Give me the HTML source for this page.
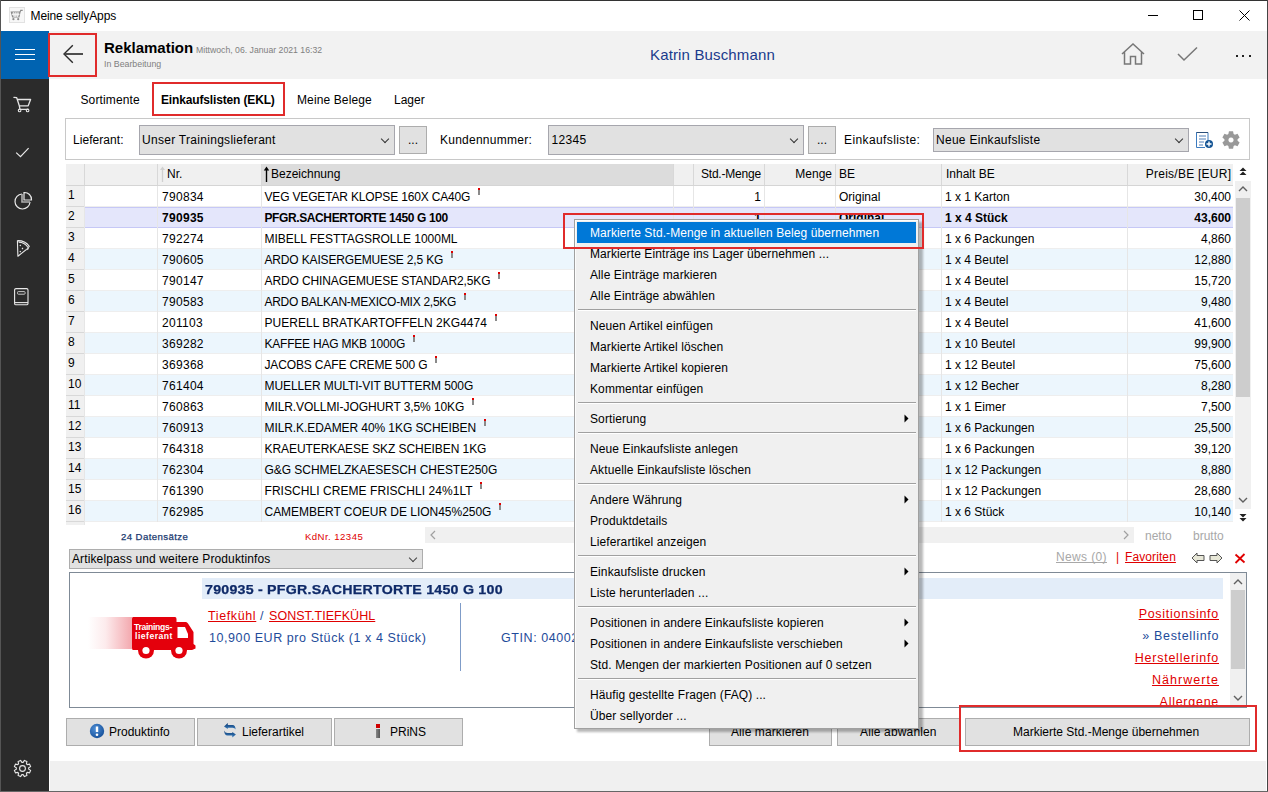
<!DOCTYPE html>
<html><head><meta charset="utf-8">
<style>
*{margin:0;padding:0;box-sizing:border-box}
html,body{width:1268px;height:792px;overflow:hidden;background:#fff}
body{position:relative;font-family:"Liberation Sans",sans-serif;font-size:12px;color:#000}
.a{position:absolute}
.t{position:absolute;white-space:pre;line-height:14px;font-size:12px}
.r{text-align:right}
.t{text-decoration-skip-ink:none}
.combo{position:absolute;background:#e1e1e1;border:1px solid #a6a6ad}
.btn{position:absolute;background:#e1e1e1;border:1px solid #adadad}
.chev{position:absolute;width:6px;height:6px;border-right:1px solid #333;border-bottom:1px solid #333;transform:rotate(45deg)}
</style></head><body>
<!-- window frame -->
<div class="a" style="left:0;top:0;width:1268px;height:1px;background:#333"></div>
<div class="a" style="left:0;top:0;width:1px;height:792px;background:#555"></div>
<div class="a" style="left:1267px;top:0;width:1px;height:792px;background:#444"></div>
<div class="a" style="left:0;top:791px;width:1268px;height:1px;background:#666"></div>

<!-- title bar -->
<svg class="a" style="left:9px;top:7px" width="16" height="16" viewBox="0 0 16 16"><rect x="0.5" y="0.5" width="15" height="15" fill="#f7f7f7" stroke="#e2e2e2" stroke-width="1"/><path d="M2.3 5.1 L3.6 10 L10 10 L11 5.1 Z" fill="#d0d0d0" stroke="#8c8c8c" stroke-width="1.1"/><path d="M4.6 5.1 L5.3 10 M6.8 5.1 L6.8 10 M9 5.1 L8.5 10 M2.8 7.5 L10.5 7.5" stroke="#f4f4f4" stroke-width="0.9"/><path d="M11 5.1 L11.7 3.4 L13.7 3.4" stroke="#8c8c8c" stroke-width="1.1" fill="none"/><circle cx="4.4" cy="12.2" r="1.1" fill="#8c8c8c"/><circle cx="9.2" cy="12.2" r="1.1" fill="#8c8c8c"/></svg>
<div class="t" style="left:30.5px;top:9px;font-size:12px;color:#000;letter-spacing:-0.12px">Meine sellyApps</div>
<!-- min/max/close -->
<div class="a" style="left:1148px;top:15px;width:10px;height:1px;background:#000"></div>
<div class="a" style="left:1193px;top:10px;width:10px;height:10px;border:1px solid #000"></div>
<svg class="a" style="left:1239px;top:10px" width="11" height="11" viewBox="0 0 11 11"><path d="M0.5 0.5 L10.5 10.5 M10.5 0.5 L0.5 10.5" stroke="#000" stroke-width="1"/></svg>

<!-- header -->
<div class="a" style="left:1px;top:31px;width:1266px;height:48px;background:#f2f2f2"></div>
<div class="a" style="left:1px;top:31px;width:48px;height:48px;background:#0063b1"></div>
<div class="a" style="left:15px;top:49px;width:20px;height:1px;background:#fff"></div>
<div class="a" style="left:15px;top:54px;width:20px;height:1px;background:#fff"></div>
<div class="a" style="left:15px;top:59px;width:20px;height:1px;background:#fff"></div>
<div class="a" style="left:48px;top:33px;width:49px;height:44px;border:2px solid #e02b2b"></div>
<svg class="a" style="left:62px;top:44px" width="22" height="20" viewBox="0 0 22 20"><path d="M10.8 1.2 L2 10 L10.8 18.8" stroke="#2a2a2a" stroke-width="1.4" fill="none"/><path d="M2.5 10 L21 10" stroke="#444" stroke-width="1.9"/></svg>
<div class="t" style="left:104px;top:39.6px;font-size:15px;font-weight:bold;line-height:16px">Reklamation</div>
<div class="t" style="left:196px;top:44.6px;font-size:8.7px;line-height:10px;color:#808080">Mittwoch, 06. Januar 2021 16:32</div>
<div class="t" style="left:104px;top:59px;font-size:8.8px;line-height:10px;color:#808080">In Bearbeitung</div>
<div class="t" style="left:650px;top:47px;font-size:15px;line-height:16px;color:#1a3a8c;letter-spacing:0.15px">Katrin Buschmann</div>
<svg class="a" style="left:1121px;top:43px" width="24" height="22" viewBox="0 0 24 22"><path d="M1 11 L12 1 L23 11 M3.5 9 L3.5 21 L9.5 21 L9.5 13.5 L14.5 13.5 L14.5 21 L20.5 21 L20.5 9" stroke="#777" stroke-width="1.5" fill="none"/></svg>
<svg class="a" style="left:1177px;top:46px" width="22" height="16" viewBox="0 0 22 16"><path d="M1 8 L7 14 L20 1.5" stroke="#777" stroke-width="1.5" fill="none"/></svg>
<div class="a" style="left:1236px;top:55px;width:2px;height:2px;background:#222"></div>
<div class="a" style="left:1242px;top:55px;width:2px;height:2px;background:#222"></div>
<div class="a" style="left:1249px;top:55px;width:2px;height:2px;background:#222"></div>

<!-- sidebar -->
<div class="a" style="left:1px;top:79px;width:48px;height:712px;background:#2b2b2b"></div>
<svg class="a" style="left:13px;top:95px" width="20" height="18" viewBox="0 0 20 18"><path d="M0.9 2.4 L3.7 2.7 L6.3 10.8 L7 14.4 L15.3 14.4 M4.3 4.5 L17.6 4.5 L15.2 10.8 L6.3 10.8" stroke="#e4e4e4" stroke-width="1.3" fill="none" stroke-linejoin="round" stroke-linecap="round"/><circle cx="6.6" cy="15.4" r="1.3" stroke="#e4e4e4" stroke-width="1.1" fill="none"/><circle cx="14.6" cy="15.4" r="1.3" stroke="#e4e4e4" stroke-width="1.1" fill="none"/></svg>
<svg class="a" style="left:15px;top:147px" width="16" height="12" viewBox="0 0 16 12"><path d="M1.2 5.6 L5.5 9.7 L13.6 1.2" stroke="#e8e8e8" stroke-width="1.2" fill="none"/></svg>
<svg class="a" style="left:13px;top:190.5px" width="20" height="20" viewBox="0 0 20 20"><path d="M9 3 A7.5 7.5 0 1 0 17 11" stroke="#e8e8e8" stroke-width="1.2" fill="none"/><path d="M9 3 L9 11 L17 11" stroke="#b0b0b0" stroke-width="1.6" fill="none"/><path d="M11 1.5 A7 7 0 0 1 18.5 9 L11 9 Z" stroke="#e8e8e8" stroke-width="1.2" fill="none"/></svg>
<svg class="a" style="left:15px;top:239px" width="18" height="19" viewBox="0 0 18 19"><path d="M2.4 1.6 L2.9 17.2 L12.5 9.6 M2.4 1.6 Q10 1.4 14.3 7.3 L12.5 9.6 M3.6 3.3 Q9.6 3.4 12.9 8.2" stroke="#e8e8e8" stroke-width="1.1" fill="none" stroke-linejoin="round"/><path d="M11.2 10.4 Q12 11 13 10 Q13.8 9 13.4 8.3" stroke="#c8c8c8" stroke-width="1.1" fill="none"/><path d="M5.3 5.5 L6.2 6.4 L5.3 7.3 L4.4 6.4 Z M7.5 8.6 L8.4 9.5 L7.5 10.4 L6.6 9.5 Z M5.3 11.7 L6.2 12.6 L5.3 13.5 L4.4 12.6 Z" fill="#e8e8e8"/></svg>
<svg class="a" style="left:13px;top:288px" width="17" height="19" viewBox="0 0 17 19"><rect x="1.6" y="0.6" width="13.4" height="16.2" rx="1.4" stroke="#e8e8e8" stroke-width="1.1" fill="none"/><path d="M1.6 14.6 L15 14.6" stroke="#e8e8e8" stroke-width="1.1"/><rect x="4.5" y="3.6" width="7.6" height="2.6" rx="0.8" stroke="#c8c8c8" stroke-width="1" fill="none"/></svg>
<svg class="a" style="left:13px;top:759px" width="19" height="19" viewBox="0 0 19 19"><path d="M15.67 10.11 L17.59 11.36 L16.53 13.91 L14.29 13.43 L13.43 14.29 L13.91 16.53 L11.36 17.59 L10.11 15.67 L8.89 15.67 L7.64 17.59 L5.09 16.53 L5.57 14.29 L4.71 13.43 L2.47 13.91 L1.41 11.36 L3.33 10.11 L3.33 8.89 L1.41 7.64 L2.47 5.09 L4.71 5.57 L5.57 4.71 L5.09 2.47 L7.64 1.41 L8.89 3.33 L10.11 3.33 L11.36 1.41 L13.91 2.47 L13.43 4.71 L14.29 5.57 L16.53 5.09 L17.59 7.64 L15.67 8.89 Z" stroke="#e8e8e8" stroke-width="1.1" fill="none"/><circle cx="9.5" cy="9.5" r="2.9" stroke="#e8e8e8" stroke-width="1.1" fill="none"/></svg>

<!-- bottom gray strip -->
<div class="a" style="left:50px;top:761px;width:1216px;height:30px;background:#f0f0f0"></div>

<!-- tabs -->
<div class="t" style="left:80.5px;top:93px;letter-spacing:0.12px">Sortimente</div>
<div class="t" style="left:161px;top:93px;font-weight:bold;letter-spacing:-0.15px">Einkaufslisten (EKL)</div>
<div class="t" style="left:297px;top:93px;letter-spacing:0.12px">Meine Belege</div>
<div class="t" style="left:394px;top:93px">Lager</div>
<div class="a" style="left:152px;top:82px;width:133px;height:34px;border:2px solid #e02b2b"></div>

<!-- filter bar -->
<div class="a" style="left:65px;top:118px;width:1185px;height:42px;border:1px solid #c8c8c8"></div>
<div class="t" style="left:73px;top:133px;letter-spacing:0.05px">Lieferant:</div>
<div class="combo" style="left:139px;top:125px;width:256px;height:30px"></div>
<div class="t" style="left:142px;top:133px;letter-spacing:0.29px">Unser Trainingslieferant</div>
<div class="chev" style="left:382px;top:136px"></div>
<div class="btn" style="left:399px;top:126px;width:28px;height:28px"></div>
<div class="t" style="left:408px;top:133px">...</div>
<div class="t" style="left:440px;top:133px;letter-spacing:0.25px">Kundennummer:</div>
<div class="combo" style="left:548px;top:125px;width:256px;height:30px"></div>
<div class="t" style="left:551.5px;top:133px;letter-spacing:0.3px">12345</div>
<div class="chev" style="left:791px;top:136px"></div>
<div class="btn" style="left:808px;top:126px;width:28px;height:28px"></div>
<div class="t" style="left:817px;top:133px">...</div>
<div class="t" style="left:844px;top:133px;letter-spacing:0.4px">Einkaufsliste:</div>
<div class="combo" style="left:933px;top:128px;width:256px;height:24px"></div>
<div class="t" style="left:936px;top:133px;letter-spacing:0.28px">Neue Einkaufsliste</div>
<div class="chev" style="left:1176px;top:136px"></div>
<svg class="a" style="left:1195px;top:131px" width="19" height="18" viewBox="0 0 19 18"><path d="M1.5 1.5 L13 1.5 L13 10 M1.5 1.5 L1.5 16.5 L10 16.5" stroke="#3d7cc0" stroke-width="1" fill="none"/><path d="M4 5 L11 5 M4 8 L11 8 M4 11 L9 11 M4 14 L8 14" stroke="#4f7fb8" stroke-width="1"/><path d="M1.5 1.5 L13 1.5" stroke="#2b4f7a" stroke-width="1"/><circle cx="14" cy="13" r="4" fill="#145494"/><path d="M14 10.5 L14 15.5 M11.5 13 L16.5 13" stroke="#fff" stroke-width="1.4"/></svg>
<svg class="a" style="left:1221px;top:130px" width="20" height="20" viewBox="0 0 20 20"><path fill-rule="evenodd" d="M7.38 3.94 L7.94 1.24 L12.06 1.24 L12.62 3.94 L13.94 4.70 L16.55 3.83 L18.62 7.41 L16.56 9.24 L16.56 10.76 L18.62 12.59 L16.55 16.17 L13.94 15.30 L12.62 16.06 L12.06 18.76 L7.94 18.76 L7.38 16.06 L6.06 15.30 L3.45 16.17 L1.38 12.59 L3.44 10.76 L3.44 9.24 L1.38 7.41 L3.45 3.83 L6.06 4.70 Z M10 7.4 A2.6 2.6 0 1 0 10.001 7.4 Z" fill="#999"/></svg>

<!-- TABLE -->
<div class="a" style="left:66px;top:164px;width:1167px;height:21px;background:#f0f0f0"></div>
<div class="a" style="left:262px;top:164px;width:411px;height:21px;background:#dcdcdc"></div>
<div class="a" style="left:66px;top:185px;width:1167px;height:1px;background:#d5d5d5"></div>
<div class="a" style="left:84px;top:164px;width:1px;height:21px;background:#d8d8d8"></div>
<div class="a" style="left:157px;top:164px;width:1px;height:21px;background:#d8d8d8"></div>
<div class="a" style="left:261px;top:164px;width:1px;height:21px;background:#d8d8d8"></div>
<div class="a" style="left:673px;top:164px;width:1px;height:21px;background:#d8d8d8"></div>
<div class="a" style="left:693px;top:164px;width:1px;height:21px;background:#d8d8d8"></div>
<div class="a" style="left:764px;top:164px;width:1px;height:21px;background:#d8d8d8"></div>
<div class="a" style="left:835px;top:164px;width:1px;height:21px;background:#d8d8d8"></div>
<div class="a" style="left:941px;top:164px;width:1px;height:21px;background:#d8d8d8"></div>
<div class="a" style="left:1127px;top:164px;width:1px;height:21px;background:#d8d8d8"></div>
<div class="t" style="left:167px;top:166.84px;">Nr.</div>
<svg class="a" style="left:159px;top:166px" width="7" height="17" viewBox="0 0 7 17"><path d="M3.5 3 L3.5 16" stroke="#d0d0d0" stroke-width="1.3"/><path d="M3.5 0.5 L6 4 L1 4 Z" fill="#d0d0d0"/></svg>
<svg class="a" style="left:263px;top:166px" width="7" height="17" viewBox="0 0 7 17"><path d="M3.5 3 L3.5 16" stroke="#000" stroke-width="1.4"/><path d="M3.5 0.5 L6.2 4.5 L0.8 4.5 Z" fill="#000"/></svg>
<div class="t" style="left:271px;top:166.84px;">Bezeichnung</div>
<div class="t r" style="left:691px;width:70px;top:166.84px;letter-spacing:-0.2px">Std.-Menge</div>
<div class="t r" style="left:772px;width:60px;top:166.84px;">Menge</div>
<div class="t" style="left:839px;top:166.84px;">BE</div>
<div class="t" style="left:946px;top:166.84px;">Inhalt BE</div>
<div class="t r" style="left:1131.3px;width:100px;top:166.84px;letter-spacing:0.25px">Preis/BE [EUR]</div>
<div class="a" style="left:85px;top:186px;width:1148px;height:21px;background:#ffffff"></div>
<div class="a" style="left:66px;top:186px;width:18px;height:21px;background:#f0f0f0"></div>
<div class="a" style="left:66px;top:206px;width:18px;height:1px;background:#d8d8d8"></div>
<div class="a" style="left:85px;top:206px;width:1148px;height:1px;background:#eeeeee"></div>
<div class="t" style="left:68px;top:187.84px;">1</div>
<div class="t" style="left:162px;top:189.84px;letter-spacing:0.3px">790834</div>
<div class="t" style="left:264.5px;top:189.84px;letter-spacing:-0.166px">VEG VEGETAR KLOPSE 160X CA40G</div>
<div class="a" style="left:478px;top:188px;width:2px;height:2px;background:#e00000"></div>
<div class="a" style="left:478px;top:190px;width:2px;height:5px;background:#8a8a8a"></div>
<div class="t r" style="left:721px;width:40px;top:189.84px;">1</div>
<div class="t" style="left:839px;top:189.84px;">Original</div>
<div class="t" style="left:945px;top:189.84px;">1 x 1 Karton</div>
<div class="t r" style="left:1151px;width:80px;top:189.84px;">30,400</div>
<div class="a" style="left:85px;top:207px;width:1148px;height:21px;background:#e4e6fb"></div>
<div class="a" style="left:66px;top:207px;width:18px;height:21px;background:#f0f0f0"></div>
<div class="a" style="left:66px;top:227px;width:18px;height:1px;background:#d8d8d8"></div>
<div class="a" style="left:85px;top:207px;width:1148px;height:1px;background:#c6c8f6"></div>
<div class="a" style="left:85px;top:227px;width:1148px;height:1px;background:#c6c8f6"></div>
<div class="t" style="left:68px;top:208.84px;">2</div>
<div class="t" style="left:162px;top:210.84px;font-weight:bold;letter-spacing:0.3px">790935</div>
<div class="t" style="left:264.5px;top:210.84px;font-weight:bold;letter-spacing:-0.393px">PFGR.SACHERTORTE 1450 G 100</div>
<div class="t r" style="left:721px;width:40px;top:210.84px;font-weight:bold;">1</div>
<div class="t" style="left:839px;top:210.84px;font-weight:bold;">Original</div>
<div class="t" style="left:945px;top:210.84px;font-weight:bold;">1 x 4 Stück</div>
<div class="t r" style="left:1151px;width:80px;top:210.84px;font-weight:bold;">43,600</div>
<div class="a" style="left:85px;top:228px;width:1148px;height:21px;background:#ffffff"></div>
<div class="a" style="left:66px;top:228px;width:18px;height:21px;background:#f0f0f0"></div>
<div class="a" style="left:66px;top:248px;width:18px;height:1px;background:#d8d8d8"></div>
<div class="a" style="left:85px;top:248px;width:1148px;height:1px;background:#eeeeee"></div>
<div class="t" style="left:68px;top:229.84px;">3</div>
<div class="t" style="left:162px;top:231.84px;letter-spacing:0.3px">792274</div>
<div class="t" style="left:264.5px;top:231.84px;letter-spacing:-0.041px">MIBELL FESTTAGSROLLE 1000ML</div>
<div class="t r" style="left:721px;width:40px;top:231.84px;">1</div>
<div class="t" style="left:839px;top:231.84px;">Original</div>
<div class="t" style="left:945px;top:231.84px;">1 x 6 Packungen</div>
<div class="t r" style="left:1151px;width:80px;top:231.84px;">4,860</div>
<div class="a" style="left:85px;top:249px;width:1148px;height:21px;background:#ecf6fd"></div>
<div class="a" style="left:66px;top:249px;width:18px;height:21px;background:#f0f0f0"></div>
<div class="a" style="left:66px;top:269px;width:18px;height:1px;background:#d8d8d8"></div>
<div class="a" style="left:85px;top:269px;width:1148px;height:1px;background:#eeeeee"></div>
<div class="t" style="left:68px;top:250.84px;">4</div>
<div class="t" style="left:162px;top:252.84px;letter-spacing:0.3px">790605</div>
<div class="t" style="left:264.5px;top:252.84px;letter-spacing:-0.16px">ARDO KAISERGEMUESE 2,5 KG</div>
<div class="a" style="left:451px;top:251px;width:2px;height:2px;background:#e00000"></div>
<div class="a" style="left:451px;top:253px;width:2px;height:5px;background:#8a8a8a"></div>
<div class="t r" style="left:721px;width:40px;top:252.84px;">1</div>
<div class="t" style="left:839px;top:252.84px;">Original</div>
<div class="t" style="left:945px;top:252.84px;">1 x 4 Beutel</div>
<div class="t r" style="left:1151px;width:80px;top:252.84px;">12,880</div>
<div class="a" style="left:85px;top:270px;width:1148px;height:21px;background:#ffffff"></div>
<div class="a" style="left:66px;top:270px;width:18px;height:21px;background:#f0f0f0"></div>
<div class="a" style="left:66px;top:290px;width:18px;height:1px;background:#d8d8d8"></div>
<div class="a" style="left:85px;top:290px;width:1148px;height:1px;background:#eeeeee"></div>
<div class="t" style="left:68px;top:271.84px;">5</div>
<div class="t" style="left:162px;top:273.84px;letter-spacing:0.3px">790147</div>
<div class="t" style="left:264.5px;top:273.84px;letter-spacing:-0.107px">ARDO CHINAGEMUESE STANDAR2,5KG</div>
<div class="a" style="left:498px;top:272px;width:2px;height:2px;background:#e00000"></div>
<div class="a" style="left:498px;top:274px;width:2px;height:5px;background:#8a8a8a"></div>
<div class="t r" style="left:721px;width:40px;top:273.84px;">1</div>
<div class="t" style="left:839px;top:273.84px;">Original</div>
<div class="t" style="left:945px;top:273.84px;">1 x 4 Beutel</div>
<div class="t r" style="left:1151px;width:80px;top:273.84px;">15,720</div>
<div class="a" style="left:85px;top:291px;width:1148px;height:21px;background:#ecf6fd"></div>
<div class="a" style="left:66px;top:291px;width:18px;height:21px;background:#f0f0f0"></div>
<div class="a" style="left:66px;top:311px;width:18px;height:1px;background:#d8d8d8"></div>
<div class="a" style="left:85px;top:311px;width:1148px;height:1px;background:#eeeeee"></div>
<div class="t" style="left:68px;top:292.84px;">6</div>
<div class="t" style="left:162px;top:294.84px;letter-spacing:0.3px">790583</div>
<div class="t" style="left:264.5px;top:294.84px;letter-spacing:-0.279px">ARDO BALKAN-MEXICO-MIX 2,5KG</div>
<div class="a" style="left:464px;top:293px;width:2px;height:2px;background:#e00000"></div>
<div class="a" style="left:464px;top:295px;width:2px;height:5px;background:#8a8a8a"></div>
<div class="t r" style="left:721px;width:40px;top:294.84px;">1</div>
<div class="t" style="left:839px;top:294.84px;">Original</div>
<div class="t" style="left:945px;top:294.84px;">1 x 4 Beutel</div>
<div class="t r" style="left:1151px;width:80px;top:294.84px;">9,480</div>
<div class="a" style="left:85px;top:312px;width:1148px;height:21px;background:#ffffff"></div>
<div class="a" style="left:66px;top:312px;width:18px;height:21px;background:#f0f0f0"></div>
<div class="a" style="left:66px;top:332px;width:18px;height:1px;background:#d8d8d8"></div>
<div class="a" style="left:85px;top:332px;width:1148px;height:1px;background:#eeeeee"></div>
<div class="t" style="left:68px;top:313.84px;">7</div>
<div class="t" style="left:162px;top:315.84px;letter-spacing:0.3px">201103</div>
<div class="t" style="left:264.5px;top:315.84px;letter-spacing:0.027px">PUERELL BRATKARTOFFELN 2KG4474</div>
<div class="a" style="left:495px;top:314px;width:2px;height:2px;background:#e00000"></div>
<div class="a" style="left:495px;top:316px;width:2px;height:5px;background:#8a8a8a"></div>
<div class="t r" style="left:721px;width:40px;top:315.84px;">1</div>
<div class="t" style="left:839px;top:315.84px;">Original</div>
<div class="t" style="left:945px;top:315.84px;">1 x 4 Beutel</div>
<div class="t r" style="left:1151px;width:80px;top:315.84px;">41,600</div>
<div class="a" style="left:85px;top:333px;width:1148px;height:21px;background:#ecf6fd"></div>
<div class="a" style="left:66px;top:333px;width:18px;height:21px;background:#f0f0f0"></div>
<div class="a" style="left:66px;top:353px;width:18px;height:1px;background:#d8d8d8"></div>
<div class="a" style="left:85px;top:353px;width:1148px;height:1px;background:#eeeeee"></div>
<div class="t" style="left:68px;top:334.84px;">8</div>
<div class="t" style="left:162px;top:336.84px;letter-spacing:0.3px">369282</div>
<div class="t" style="left:264.5px;top:336.84px;letter-spacing:-0.21px">KAFFEE HAG MKB 1000G</div>
<div class="a" style="left:413px;top:335px;width:2px;height:2px;background:#e00000"></div>
<div class="a" style="left:413px;top:337px;width:2px;height:5px;background:#8a8a8a"></div>
<div class="t r" style="left:721px;width:40px;top:336.84px;">1</div>
<div class="t" style="left:839px;top:336.84px;">Original</div>
<div class="t" style="left:945px;top:336.84px;">1 x 10 Beutel</div>
<div class="t r" style="left:1151px;width:80px;top:336.84px;">99,900</div>
<div class="a" style="left:85px;top:354px;width:1148px;height:21px;background:#ffffff"></div>
<div class="a" style="left:66px;top:354px;width:18px;height:21px;background:#f0f0f0"></div>
<div class="a" style="left:66px;top:374px;width:18px;height:1px;background:#d8d8d8"></div>
<div class="a" style="left:85px;top:374px;width:1148px;height:1px;background:#eeeeee"></div>
<div class="t" style="left:68px;top:355.84px;">9</div>
<div class="t" style="left:162px;top:357.84px;letter-spacing:0.3px">369368</div>
<div class="t" style="left:264.5px;top:357.84px;letter-spacing:-0.139px">JACOBS CAFE CREME 500 G</div>
<div class="a" style="left:435px;top:356px;width:2px;height:2px;background:#e00000"></div>
<div class="a" style="left:435px;top:358px;width:2px;height:5px;background:#8a8a8a"></div>
<div class="t r" style="left:721px;width:40px;top:357.84px;">1</div>
<div class="t" style="left:839px;top:357.84px;">Original</div>
<div class="t" style="left:945px;top:357.84px;">1 x 12 Beutel</div>
<div class="t r" style="left:1151px;width:80px;top:357.84px;">75,600</div>
<div class="a" style="left:85px;top:375px;width:1148px;height:21px;background:#ecf6fd"></div>
<div class="a" style="left:66px;top:375px;width:18px;height:21px;background:#f0f0f0"></div>
<div class="a" style="left:66px;top:395px;width:18px;height:1px;background:#d8d8d8"></div>
<div class="a" style="left:85px;top:395px;width:1148px;height:1px;background:#eeeeee"></div>
<div class="t" style="left:68px;top:376.84px;">10</div>
<div class="t" style="left:162px;top:378.84px;letter-spacing:0.3px">761404</div>
<div class="t" style="left:264.5px;top:378.84px;letter-spacing:-0.097px">MUELLER MULTI-VIT BUTTERM 500G</div>
<div class="t r" style="left:721px;width:40px;top:378.84px;">1</div>
<div class="t" style="left:839px;top:378.84px;">Original</div>
<div class="t" style="left:945px;top:378.84px;">1 x 12 Becher</div>
<div class="t r" style="left:1151px;width:80px;top:378.84px;">8,280</div>
<div class="a" style="left:85px;top:396px;width:1148px;height:21px;background:#ffffff"></div>
<div class="a" style="left:66px;top:396px;width:18px;height:21px;background:#f0f0f0"></div>
<div class="a" style="left:66px;top:416px;width:18px;height:1px;background:#d8d8d8"></div>
<div class="a" style="left:85px;top:416px;width:1148px;height:1px;background:#eeeeee"></div>
<div class="t" style="left:68px;top:397.84px;">11</div>
<div class="t" style="left:162px;top:399.84px;letter-spacing:0.3px">760863</div>
<div class="t" style="left:264.5px;top:399.84px;letter-spacing:-0.086px">MILR.VOLLMI-JOGHURT 3,5% 10KG</div>
<div class="a" style="left:472px;top:398px;width:2px;height:2px;background:#e00000"></div>
<div class="a" style="left:472px;top:400px;width:2px;height:5px;background:#8a8a8a"></div>
<div class="t r" style="left:721px;width:40px;top:399.84px;">1</div>
<div class="t" style="left:839px;top:399.84px;">Original</div>
<div class="t" style="left:945px;top:399.84px;">1 x 1 Eimer</div>
<div class="t r" style="left:1151px;width:80px;top:399.84px;">7,500</div>
<div class="a" style="left:85px;top:417px;width:1148px;height:21px;background:#ecf6fd"></div>
<div class="a" style="left:66px;top:417px;width:18px;height:21px;background:#f0f0f0"></div>
<div class="a" style="left:66px;top:437px;width:18px;height:1px;background:#d8d8d8"></div>
<div class="a" style="left:85px;top:437px;width:1148px;height:1px;background:#eeeeee"></div>
<div class="t" style="left:68px;top:418.84px;">12</div>
<div class="t" style="left:162px;top:420.84px;letter-spacing:0.3px">760913</div>
<div class="t" style="left:264.5px;top:420.84px;letter-spacing:-0.083px">MILR.K.EDAMER 40% 1KG SCHEIBEN</div>
<div class="a" style="left:484px;top:419px;width:2px;height:2px;background:#e00000"></div>
<div class="a" style="left:484px;top:421px;width:2px;height:5px;background:#8a8a8a"></div>
<div class="t r" style="left:721px;width:40px;top:420.84px;">1</div>
<div class="t" style="left:839px;top:420.84px;">Original</div>
<div class="t" style="left:945px;top:420.84px;">1 x 6 Packungen</div>
<div class="t r" style="left:1151px;width:80px;top:420.84px;">25,500</div>
<div class="a" style="left:85px;top:438px;width:1148px;height:21px;background:#ffffff"></div>
<div class="a" style="left:66px;top:438px;width:18px;height:21px;background:#f0f0f0"></div>
<div class="a" style="left:66px;top:458px;width:18px;height:1px;background:#d8d8d8"></div>
<div class="a" style="left:85px;top:458px;width:1148px;height:1px;background:#eeeeee"></div>
<div class="t" style="left:68px;top:439.84px;">13</div>
<div class="t" style="left:162px;top:441.84px;letter-spacing:0.3px">764318</div>
<div class="t" style="left:264.5px;top:441.84px;letter-spacing:-0.073px">KRAEUTERKAESE SKZ SCHEIBEN 1KG</div>
<div class="t r" style="left:721px;width:40px;top:441.84px;">1</div>
<div class="t" style="left:839px;top:441.84px;">Original</div>
<div class="t" style="left:945px;top:441.84px;">1 x 6 Packungen</div>
<div class="t r" style="left:1151px;width:80px;top:441.84px;">39,120</div>
<div class="a" style="left:85px;top:459px;width:1148px;height:21px;background:#ecf6fd"></div>
<div class="a" style="left:66px;top:459px;width:18px;height:21px;background:#f0f0f0"></div>
<div class="a" style="left:66px;top:479px;width:18px;height:1px;background:#d8d8d8"></div>
<div class="a" style="left:85px;top:479px;width:1148px;height:1px;background:#eeeeee"></div>
<div class="t" style="left:68px;top:460.84px;">14</div>
<div class="t" style="left:162px;top:462.84px;letter-spacing:0.3px">762304</div>
<div class="t" style="left:264.5px;top:462.84px;letter-spacing:-0.043px">G&amp;G SCHMELZKAESESCH CHESTE250G</div>
<div class="t r" style="left:721px;width:40px;top:462.84px;">1</div>
<div class="t" style="left:839px;top:462.84px;">Original</div>
<div class="t" style="left:945px;top:462.84px;">1 x 12 Packungen</div>
<div class="t r" style="left:1151px;width:80px;top:462.84px;">8,880</div>
<div class="a" style="left:85px;top:480px;width:1148px;height:21px;background:#ffffff"></div>
<div class="a" style="left:66px;top:480px;width:18px;height:21px;background:#f0f0f0"></div>
<div class="a" style="left:66px;top:500px;width:18px;height:1px;background:#d8d8d8"></div>
<div class="a" style="left:85px;top:500px;width:1148px;height:1px;background:#eeeeee"></div>
<div class="t" style="left:68px;top:481.84px;">15</div>
<div class="t" style="left:162px;top:483.84px;letter-spacing:0.3px">761390</div>
<div class="t" style="left:264.5px;top:483.84px;letter-spacing:0.057px">FRISCHLI CREME FRISCHLI 24%1LT</div>
<div class="a" style="left:480px;top:482px;width:2px;height:2px;background:#e00000"></div>
<div class="a" style="left:480px;top:484px;width:2px;height:5px;background:#8a8a8a"></div>
<div class="t r" style="left:721px;width:40px;top:483.84px;">1</div>
<div class="t" style="left:839px;top:483.84px;">Original</div>
<div class="t" style="left:945px;top:483.84px;">1 x 12 Packungen</div>
<div class="t r" style="left:1151px;width:80px;top:483.84px;">28,680</div>
<div class="a" style="left:85px;top:501px;width:1148px;height:21px;background:#ecf6fd"></div>
<div class="a" style="left:66px;top:501px;width:18px;height:21px;background:#f0f0f0"></div>
<div class="a" style="left:66px;top:521px;width:18px;height:1px;background:#d8d8d8"></div>
<div class="a" style="left:85px;top:521px;width:1148px;height:1px;background:#eeeeee"></div>
<div class="t" style="left:68px;top:502.84px;">16</div>
<div class="t" style="left:162px;top:504.84px;letter-spacing:0.3px">762985</div>
<div class="t" style="left:264.5px;top:504.84px;letter-spacing:-0.023px">CAMEMBERT COEUR DE LION45%250G</div>
<div class="a" style="left:499px;top:503px;width:2px;height:2px;background:#e00000"></div>
<div class="a" style="left:499px;top:505px;width:2px;height:5px;background:#8a8a8a"></div>
<div class="t r" style="left:721px;width:40px;top:504.84px;">1</div>
<div class="t" style="left:839px;top:504.84px;">Original</div>
<div class="t" style="left:945px;top:504.84px;">1 x 6 Stück</div>
<div class="t r" style="left:1151px;width:80px;top:504.84px;">10,140</div>
<div class="a" style="left:84px;top:186px;width:1px;height:339px;background:#e6e6e6"></div>
<div class="a" style="left:157px;top:186px;width:1px;height:339px;background:#e6e6e6"></div>
<div class="a" style="left:261px;top:186px;width:1px;height:339px;background:#e6e6e6"></div>
<div class="a" style="left:673px;top:186px;width:1px;height:339px;background:#e6e6e6"></div>
<div class="a" style="left:693px;top:186px;width:1px;height:339px;background:#e6e6e6"></div>
<div class="a" style="left:764px;top:186px;width:1px;height:339px;background:#e6e6e6"></div>
<div class="a" style="left:835px;top:186px;width:1px;height:339px;background:#e6e6e6"></div>
<div class="a" style="left:941px;top:186px;width:1px;height:339px;background:#e6e6e6"></div>
<div class="a" style="left:1127px;top:186px;width:1px;height:339px;background:#e6e6e6"></div>
<div class="a" style="left:66px;top:522px;width:18px;height:3px;background:#f0f0f0"></div>
<div class="a" style="left:85px;top:522px;width:1148px;height:3px;background:#ffffff"></div>
<div class="a" style="left:1235px;top:181px;width:16px;height:328px;background:#f0f0f0"></div>
<div class="a" style="left:1236px;top:198px;width:14px;height:199px;background:#cdcdcd"></div>
<svg class="a" style="left:1238px;top:185px" width="10" height="8" viewBox="0 0 10 8"><path d="M1 6 L5 2 L9 6" stroke="#606060" stroke-width="1.4" fill="none"/></svg>
<svg class="a" style="left:1238px;top:496px" width="10" height="8" viewBox="0 0 10 8"><path d="M1 2 L5 6 L9 2" stroke="#606060" stroke-width="1.4" fill="none"/></svg>
<svg class="a" style="left:1239px;top:167px" width="8" height="9" viewBox="0 0 8 9"><path d="M4 0.5 L7.5 4 L0.5 4 Z M4 4.5 L7.5 8 L0.5 8 Z" fill="#222"/></svg>
<svg class="a" style="left:1239px;top:513px" width="8" height="9" viewBox="0 0 8 9"><path d="M0.5 1 L7.5 1 L4 4.5 Z M0.5 5 L7.5 5 L4 8.5 Z" fill="#222"/></svg>
<div class="a" style="left:425px;top:527px;width:709px;height:16px;background:#f0f0f0"></div>
<svg class="a" style="left:429px;top:530px" width="8" height="10" viewBox="0 0 8 10"><path d="M6 1 L2 5 L6 9" stroke="#a0a0a0" stroke-width="1.2" fill="none"/></svg>
<svg class="a" style="left:1122px;top:530px" width="8" height="10" viewBox="0 0 8 10"><path d="M2 1 L6 5 L2 9" stroke="#a0a0a0" stroke-width="1.2" fill="none"/></svg>
<div class="t" style="left:1145px;top:528.84px;color:#a8a8a8">netto</div>
<div class="t" style="left:1193px;top:528.84px;color:#a8a8a8">brutto</div>
<div class="t" style="left:121px;top:529.67px;font-size:9.6px;letter-spacing:0.42px;color:#1a3a70;-webkit-text-stroke:0.25px #1a3a70">24 Datensätze</div>
<div class="t" style="left:305px;top:529.67px;font-size:9.6px;letter-spacing:0.44px;color:#e00000">KdNr. 12345</div>

<!-- dropdown artikelpass -->
<div class="combo" style="left:69px;top:549px;width:354px;height:20px;border-color:#adadad"></div>
<div class="t" style="left:72px;top:552px;letter-spacing:0.12px">Artikelpass und weitere Produktinfos</div>
<div class="chev" style="left:410px;top:555px;width:6px;height:6px;border-color:#444"></div>
<div class="t" style="left:1056px;top:550px;color:#a8a8a8;text-decoration:underline;letter-spacing:0.37px">News (0)</div>
<div class="t" style="left:1116px;top:550px;color:#e00000">|</div>
<div class="t" style="left:1125px;top:550px;color:#e00000;text-decoration:underline;letter-spacing:0.1px">Favoriten</div>
<svg class="a" style="left:1191px;top:552px" width="14" height="12" viewBox="0 0 14 12"><path d="M1 6 L6 1 L6 3.5 L13 3.5 L13 8.5 L6 8.5 L6 11 Z" fill="#e8e8d8" stroke="#555" stroke-width="1"/></svg>
<svg class="a" style="left:1209px;top:552px" width="14" height="12" viewBox="0 0 14 12"><path d="M13 6 L8 1 L8 3.5 L1 3.5 L1 8.5 L8 8.5 L8 11 Z" fill="#e8e8d8" stroke="#555" stroke-width="1"/></svg>
<svg class="a" style="left:1234px;top:553px" width="12" height="11" viewBox="0 0 12 11"><path d="M1.5 1.5 L10.5 9.5 M10.5 1 L1.5 10" stroke="#e00000" stroke-width="1.8"/></svg>

<!-- product box -->
<div class="a" style="left:69px;top:572px;width:1178px;height:136px;border:1px solid #7f8a96;background:#fff"></div>
<div class="a" style="left:202px;top:578px;width:1021px;height:21px;background:#e3edf9"></div>
<div class="t" style="left:205px;top:583px;font-weight:bold;font-size:12.3px;color:#0f2a68;letter-spacing:0.2px;transform:scaleX(1.155);transform-origin:0 0;-webkit-text-stroke:0.25px #0f2a68">790935 - PFGR.SACHERTORTE 1450 G 100</div>
<div class="t" style="left:208px;top:609px;font-size:12.5px;color:#e00000;text-decoration:underline;letter-spacing:0.62px">Tiefkühl</div>
<div class="t" style="left:260px;top:609px;font-size:12.5px;color:#1e4b9a">/</div>
<div class="t" style="left:269px;top:609px;font-size:12.5px;color:#e00000;text-decoration:underline;letter-spacing:0.05px">SONST.TIEFKÜHL</div>
<div class="t" style="left:209px;top:631px;font-size:12.5px;color:#1e4b9a;letter-spacing:0.57px">10,900 EUR pro Stück (1 x 4 Stück)</div>
<div class="a" style="left:460px;top:603px;width:1px;height:68px;background:#7f9cc8"></div>
<div class="t" style="left:501px;top:631px;font-size:12.5px;color:#1e4b9a;letter-spacing:0.57px">GTIN: 04002</div>
<div class="t r" style="left:1019px;width:200px;top:607px;font-size:12.5px;color:#e00000;text-decoration:underline;letter-spacing:0.73px">Positionsinfo</div>
<div class="t r" style="left:1019px;width:200px;top:629px;font-size:12.5px;color:#1e4b9a;letter-spacing:0.66px">» Bestellinfo</div>
<div class="t r" style="left:1019px;width:200px;top:651px;font-size:12.5px;color:#e00000;text-decoration:underline;letter-spacing:0.76px">Herstellerinfo</div>
<div class="t r" style="left:1019px;width:200px;top:673px;font-size:12.5px;color:#e00000;text-decoration:underline;letter-spacing:1.04px">Nährwerte</div>
<div class="a" style="left:1019px;top:690px;width:205px;height:17px;overflow:hidden"><div class="t r" style="left:0;width:200px;top:5px;font-size:12.5px;color:#e00000;text-decoration:underline;letter-spacing:0.73px">Allergene</div></div>
<div class="a" style="left:1230px;top:573px;width:16px;height:134px;background:#f0f0f0"></div>
<div class="a" style="left:1231px;top:590px;width:14px;height:79px;background:#cdcdcd"></div>
<svg class="a" style="left:1233px;top:578px" width="10" height="8" viewBox="0 0 10 8"><path d="M1 6 L5 2 L9 6" stroke="#606060" stroke-width="1.4" fill="none"/></svg>
<svg class="a" style="left:1233px;top:694px" width="10" height="8" viewBox="0 0 10 8"><path d="M1 2 L5 6 L9 2" stroke="#606060" stroke-width="1.4" fill="none"/></svg>

<!-- truck -->
<div class="a" style="left:88px;top:617px;width:44px;height:32px;background:linear-gradient(to right,rgba(240,120,130,0),rgba(240,120,130,0.15) 40%,rgba(235,110,120,0.6))"></div>
<svg class="a" style="left:130px;top:615px" width="68" height="46" viewBox="0 0 68 46"><path d="M3 2 L45 2 Q46.5 2 46.5 4 L46.5 7 L56 7 Q57 7 58 8.5 L63.5 17 L63.5 29 L65.5 30.5 L65.5 33.5 L62 35 L3 35 Q2 35 2 33 L2 4 Q2 2 3 2 Z" fill="#e4000c"/><path d="M47.5 12 L55 12 L58 19 L58 23 L47.5 23 Z" fill="#fff"/><circle cx="16" cy="35.5" r="8" fill="#e4000c"/><circle cx="16" cy="35.5" r="3.6" fill="#fff"/><circle cx="49" cy="35.5" r="8" fill="#e4000c"/><circle cx="49" cy="35.5" r="3.6" fill="#fff"/><text x="4" y="14.5" font-family="Liberation Sans" font-size="8.6" font-weight="bold" fill="#fff" letter-spacing="-0.3">Trainings-</text><text x="5" y="23.5" font-family="Liberation Sans" font-size="8.6" font-weight="bold" fill="#fff" letter-spacing="0.5">lieferant</text></svg>

<!-- buttons -->
<div class="btn" style="left:66px;top:718px;width:129px;height:28px"></div>
<svg class="a" style="left:89px;top:723px" width="16" height="16" viewBox="0 0 16 16"><defs><radialGradient id="ig" cx="0.4" cy="0.35" r="0.7"><stop offset="0" stop-color="#4f8fd6"/><stop offset="1" stop-color="#154f99"/></radialGradient></defs><circle cx="8" cy="8" r="7.2" fill="url(#ig)"/><path d="M8 3.5 L8 9" stroke="#fff" stroke-width="2.4"/><circle cx="8" cy="11.8" r="1.3" fill="#fff"/></svg>
<div class="t" style="left:109px;top:725px">Produktinfo</div>
<div class="btn" style="left:197px;top:718px;width:135px;height:28px"></div>
<svg class="a" style="left:220px;top:720px" width="20" height="20" viewBox="0 0 20 20"><defs><linearGradient id="sg" x1="0" y1="0" x2="0" y2="1"><stop offset="0" stop-color="#0c3a72"/><stop offset="1" stop-color="#3b7fc0"/></linearGradient></defs><path d="M4 6.4 L7.8 3 L7.8 5 L12.5 5 Q15.6 5.2 15.6 9.6 Q14.8 7.8 12.5 7.8 L7.8 7.8 L7.8 8.9 Z" fill="url(#sg)"/><path d="M15.9 14.5 L12.3 11.9 L12.3 12.9 L7.5 12.9 Q5 12.9 4.3 10.4 Q4.3 15.5 7.5 15.5 L12.3 15.5 L12.3 17.6 Z" fill="url(#sg)"/></svg>
<div class="t" style="left:242px;top:725px">Lieferartikel</div>
<div class="btn" style="left:334px;top:718px;width:129px;height:28px"></div>
<div class="a" style="left:376px;top:724px;width:4px;height:4px;background:#d00000"></div>
<div class="a" style="left:376px;top:729px;width:4px;height:9px;background:linear-gradient(to right,#888,#555)"></div>
<div class="t" style="left:390px;top:725px">PRiNS</div>
<div class="btn" style="left:709px;top:718px;width:123px;height:28px"></div>
<div class="t" style="left:731px;top:725px;letter-spacing:0.1px">Alle markieren</div>
<div class="btn" style="left:837px;top:718px;width:124px;height:28px"></div>
<div class="t" style="left:860px;top:725px;letter-spacing:0.15px">Alle abwählen</div>
<div class="btn" style="left:965px;top:718px;width:285px;height:28px"></div>
<div class="t" style="left:1013px;top:725px">Markierte Std.-Menge übernehmen</div>
<div class="a" style="left:959px;top:705px;width:298px;height:47px;border:2px solid #e02b2b"></div>

<!-- CONTEXT MENU -->
<div class="a" style="left:577px;top:222px;width:346px;height:510px;background:rgba(0,0,0,0.28);filter:blur(1.2px)"></div>
<div class="a" style="left:574px;top:219px;width:345px;height:510px;background:#f0f0f0;border:1px solid #a0a0a0"></div>
<div class="a" style="left:575px;top:220px;width:343px;height:508px;border:1px solid #fcfcfc;border-right:none;border-bottom:none"></div>
<div class="a" style="left:577px;top:222px;width:339px;height:21px;background:#0078d7"></div>
<div class="t" style="left:590px;top:225.84px;color:#fff;letter-spacing:0.1px">Markierte Std.-Menge in aktuellen Beleg übernehmen</div>
<div class="t" style="left:590px;top:246.84px;color:#000;letter-spacing:0.1px">Markierte Einträge ins Lager übernehmen ...</div>
<div class="t" style="left:590px;top:267.84px;color:#000;letter-spacing:0.1px">Alle Einträge markieren</div>
<div class="t" style="left:590px;top:288.84px;color:#000;letter-spacing:0.1px">Alle Einträge abwählen</div>
<div class="a" style="left:578px;top:309px;width:338px;height:1px;background:#a0a0a0"></div>
<div class="a" style="left:578px;top:310px;width:338px;height:1px;background:#ffffff"></div>
<div class="t" style="left:590px;top:318.84px;color:#000;letter-spacing:0.1px">Neuen Artikel einfügen</div>
<div class="t" style="left:590px;top:339.84px;color:#000;letter-spacing:0.1px">Markierte Artikel löschen</div>
<div class="t" style="left:590px;top:360.84px;color:#000;letter-spacing:0.1px">Markierte Artikel kopieren</div>
<div class="t" style="left:590px;top:381.84px;color:#000;letter-spacing:0.1px">Kommentar einfügen</div>
<div class="a" style="left:578px;top:402px;width:338px;height:1px;background:#a0a0a0"></div>
<div class="a" style="left:578px;top:403px;width:338px;height:1px;background:#ffffff"></div>
<div class="t" style="left:590px;top:411.84px;color:#000;letter-spacing:0.1px">Sortierung</div>
<svg class="a" style="left:904px;top:414px" width="5" height="9" viewBox="0 0 5 9"><path d="M0.5 0.5 L4.5 4.5 L0.5 8.5 Z" fill="#000"/></svg>
<div class="a" style="left:578px;top:432px;width:338px;height:1px;background:#a0a0a0"></div>
<div class="a" style="left:578px;top:433px;width:338px;height:1px;background:#ffffff"></div>
<div class="t" style="left:590px;top:441.84px;color:#000;letter-spacing:0.1px">Neue Einkaufsliste anlegen</div>
<div class="t" style="left:590px;top:462.84px;color:#000;letter-spacing:0.1px">Aktuelle Einkaufsliste löschen</div>
<div class="a" style="left:578px;top:483px;width:338px;height:1px;background:#a0a0a0"></div>
<div class="a" style="left:578px;top:484px;width:338px;height:1px;background:#ffffff"></div>
<div class="t" style="left:590px;top:492.84px;color:#000;letter-spacing:0.1px">Andere Währung</div>
<svg class="a" style="left:904px;top:495px" width="5" height="9" viewBox="0 0 5 9"><path d="M0.5 0.5 L4.5 4.5 L0.5 8.5 Z" fill="#000"/></svg>
<div class="t" style="left:590px;top:513.84px;color:#000;letter-spacing:0.1px">Produktdetails</div>
<div class="t" style="left:590px;top:534.84px;color:#000;letter-spacing:0.1px">Lieferartikel anzeigen</div>
<div class="a" style="left:578px;top:555px;width:338px;height:1px;background:#a0a0a0"></div>
<div class="a" style="left:578px;top:556px;width:338px;height:1px;background:#ffffff"></div>
<div class="t" style="left:590px;top:564.84px;color:#000;letter-spacing:0.1px">Einkaufsliste drucken</div>
<svg class="a" style="left:904px;top:567px" width="5" height="9" viewBox="0 0 5 9"><path d="M0.5 0.5 L4.5 4.5 L0.5 8.5 Z" fill="#000"/></svg>
<div class="t" style="left:590px;top:585.84px;color:#000;letter-spacing:0.1px">Liste herunterladen ...</div>
<div class="a" style="left:578px;top:606px;width:338px;height:1px;background:#a0a0a0"></div>
<div class="a" style="left:578px;top:607px;width:338px;height:1px;background:#ffffff"></div>
<div class="t" style="left:590px;top:615.84px;color:#000;letter-spacing:0.1px">Positionen in andere Einkaufsliste kopieren</div>
<svg class="a" style="left:904px;top:618px" width="5" height="9" viewBox="0 0 5 9"><path d="M0.5 0.5 L4.5 4.5 L0.5 8.5 Z" fill="#000"/></svg>
<div class="t" style="left:590px;top:636.84px;color:#000;letter-spacing:0.1px">Positionen in andere Einkaufsliste verschieben</div>
<svg class="a" style="left:904px;top:639px" width="5" height="9" viewBox="0 0 5 9"><path d="M0.5 0.5 L4.5 4.5 L0.5 8.5 Z" fill="#000"/></svg>
<div class="t" style="left:590px;top:657.84px;color:#000;letter-spacing:0.1px">Std. Mengen der markierten Positionen auf 0 setzen</div>
<div class="a" style="left:578px;top:678px;width:338px;height:1px;background:#a0a0a0"></div>
<div class="a" style="left:578px;top:679px;width:338px;height:1px;background:#ffffff"></div>
<div class="t" style="left:590px;top:687.84px;color:#000;letter-spacing:0.1px">Häufig gestellte Fragen (FAQ) ...</div>
<div class="t" style="left:590px;top:708.84px;color:#000;letter-spacing:0.1px">Über sellyorder ...</div>
<div class="a" style="left:563px;top:213px;width:361px;height:36px;border:2px solid #e02b2b"></div>

</body></html>
